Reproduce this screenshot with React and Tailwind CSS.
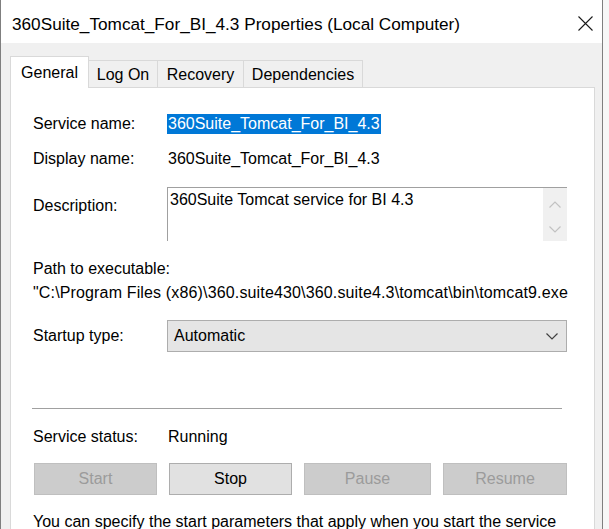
import React from 'react';

const Row = ({ children, className = '' }) => (
  <div className={`flex items-center ${className}`}>{children}</div>
);

const Label = ({ children, className = '' }) => (
  <div className={`w-[134px] shrink-0 ${className}`}>{children}</div>
);

const Chevron = ({ up, className = '' }) => (
  <svg width="12" height="7" viewBox="0 0 12 7" className={className}>
    <path
      d={up ? 'M0.5 6.5 L6 1 L11.5 6.5' : 'M0.5 0.5 L6 6 L11.5 0.5'}
      fill="none"
      stroke="currentColor"
      strokeWidth="1.2"
    />
  </svg>
);

const ServiceButton = ({ label, width, disabled }) => (
  <button
    className={`h-[32px] ${width} border ${
      disabled
        ? 'border-[#bfbfbf] bg-[#cccccc] text-[#9b9b9b]'
        : 'border-[#adadad] bg-[#e1e1e1] text-black'
    }`}
  >
    {label}
  </button>
);

export default function App() {
  return (
    <div className="flex h-[529px] w-[609px] overflow-hidden bg-[#f7f7f7] font-['Liberation_Sans',Arial,sans-serif] text-[16px] leading-[20px] text-black">
      <div className="flex w-[603px] shrink-0 flex-col border-x border-[#7f7f7f] bg-[#f0f0f0]">
        {/* Title bar */}
        <div className="flex h-[43px] shrink-0 items-center justify-between bg-white pl-[11px] pr-[9px]">
          <span className="pt-[4px] text-[17.2px]">360Suite_Tomcat_For_BI_4.3 Properties (Local Computer)</span>
          <svg width="15" height="15" viewBox="0 0 15 15" className="mt-[4px]">
            <path d="M0.5 0.5 L14.5 14.5 M14.5 0.5 L0.5 14.5" stroke="#1a1a1a" strokeWidth="1.1" />
          </svg>
        </div>

        {/* Tabs */}
        <div className="mt-[13px] flex shrink-0 items-end pl-[9px]">
          <div className="relative z-10 -mb-px flex h-[32px] w-[79px] items-center justify-center border border-b-0 border-[#d9d9d9] bg-white">
            General
          </div>
          <div className="-ml-px flex h-[27px] w-[70px] items-center justify-center border border-b-0 border-[#d9d9d9] bg-[#f0f0f0] pt-[2px]">
            Log On
          </div>
          <div className="-ml-px flex h-[27px] w-[87px] items-center justify-center border border-b-0 border-[#d9d9d9] bg-[#f0f0f0] pt-[2px]">
            Recovery
          </div>
          <div className="-ml-px flex h-[27px] w-[120px] items-center justify-center border border-b-0 border-[#d9d9d9] bg-[#f0f0f0] pt-[2px]">
            Dependencies
          </div>
        </div>

        {/* General panel */}
        <div className="ml-[9px] w-[585px] flex-1 overflow-hidden border border-b-0 border-[#d9d9d9] bg-white pl-[22px] pt-[26px]">
          <Row className="h-[20px]">
            <Label>Service name:</Label>
            <span className="bg-[#0078d7] pl-[1px] pr-[1px] text-white">360Suite_Tomcat_For_BI_4.3</span>
          </Row>

          <Row className="mt-[15px] h-[20px]">
            <Label>Display name:</Label>
            <span className="pl-[1px]">360Suite_Tomcat_For_BI_4.3</span>
          </Row>

          <div className="mt-[18px] flex">
            <Label className="pt-[9px]">Description:</Label>
            <div className="flex h-[54px] w-[400px] border-l border-t border-[#a0a0a0] bg-white">
              <div className="flex-1 pl-[2px] pt-[2px]">360Suite Tomcat service for BI 4.3</div>
              <div className="flex w-[24px] flex-col items-center bg-[#f0f0f0] text-[#c2c2c2]">
                <Chevron up className="mt-[13px]" />
                <Chevron className="mt-[18px]" />
              </div>
            </div>
          </div>

          <div className="mt-[18px] h-[20px]">Path to executable:</div>
          <div className="mt-[4px] h-[20px] whitespace-nowrap tracking-[0.15px]">
            "C:\Program Files (x86)\360.suite430\360.suite4.3\tomcat\bin\tomcat9.exe
          </div>

          <Row className="mt-[17px]">
            <Label>Startup type:</Label>
            <div className="flex h-[32px] w-[400px] items-center justify-between border border-[#adadad] bg-[#e5e5e5] pl-[6px] pr-[8px]">
              <span>Automatic</span>
              <Chevron className="text-[#404040]" />
            </div>
          </Row>

          <div className="-ml-px mt-[56px] h-px w-[530px] bg-[#a0a0a0]" />

          <Row className="mt-[18px] h-[20px]">
            <Label>Service status:</Label>
            <span className="pl-[1px]">Running</span>
          </Row>

          <div className="ml-[1px] mt-[16px] flex gap-[12px]">
            <ServiceButton label="Start" width="w-[123px]" disabled />
            <ServiceButton label="Stop" width="w-[123px]" />
            <ServiceButton label="Pause" width="w-[127px]" disabled />
            <ServiceButton label="Resume" width="w-[124px]" disabled />
          </div>

          <div className="mt-[17px] whitespace-nowrap">
            You can specify the start parameters that apply when you start the service
          </div>
        </div>
      </div>
      <div className="flex-1 bg-[#f7f7f7]" />
    </div>
  );
}
